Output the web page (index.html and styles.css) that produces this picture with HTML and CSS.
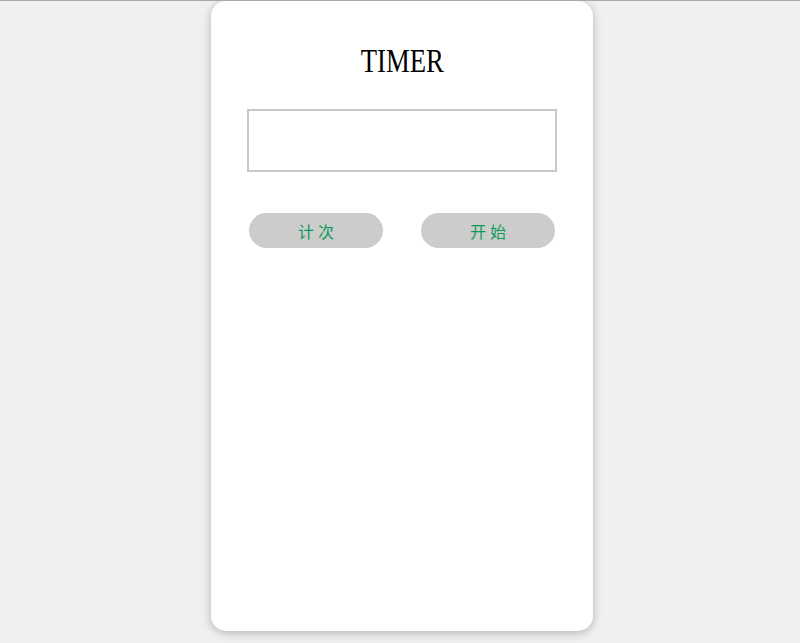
FILE: index.html
```html
<!DOCTYPE html>
<html>
<head>
<meta charset="utf-8">
<link rel="stylesheet" href="styles.css">
</head>
<body>
<div class="card">
  <h1 class="title">TIMER</h1>
  <div class="display"></div>
  <div class="buttons">
    <button class="btn">计次</button>
    <button class="btn">开始</button>
  </div>
</div>
</body>
</html>
```
FILE: styles.css
```css
html {
  background: #f0f0f0;
}
body {
  margin: 0;
  border-top: 1px solid #a8a8a8;
  background: #f0f0f0;
  height: 642px;
  overflow: hidden;
}
.card {
  width: 382px;
  height: 630px;
  margin: 0 0 0 211px;
  background: #fff;
  border-radius: 15px;
  box-shadow: 0 2px 10px rgba(0,0,0,0.25);
  box-sizing: border-box;
  padding: 40px 36px 0 36px;
  display: flex;
  flex-direction: column;
  align-items: center;
}
.title {
  margin: 0;
  font-family: "Liberation Serif", serif;
  font-weight: normal;
  font-size: 33px;
  line-height: 40px;
  color: #000;
  transform: scaleX(0.81);
}
.display {
  margin-top: 28px;
  width: 310px;
  height: 63px;
  box-sizing: border-box;
  border: 2px solid #c8c8c8;
}
.buttons {
  margin-top: 41px;
  width: 306px;
  display: flex;
  justify-content: space-between;
}
.btn {
  width: 134px;
  height: 35px;
  border: none;
  border-radius: 18px;
  background: #cccccc;
  color: #0e9a5a;
  font-family: "Noto Sans CJK SC", sans-serif;
  font-size: 16px;
  letter-spacing: 4px;
  padding: 0 0 0 4px;
}
```
